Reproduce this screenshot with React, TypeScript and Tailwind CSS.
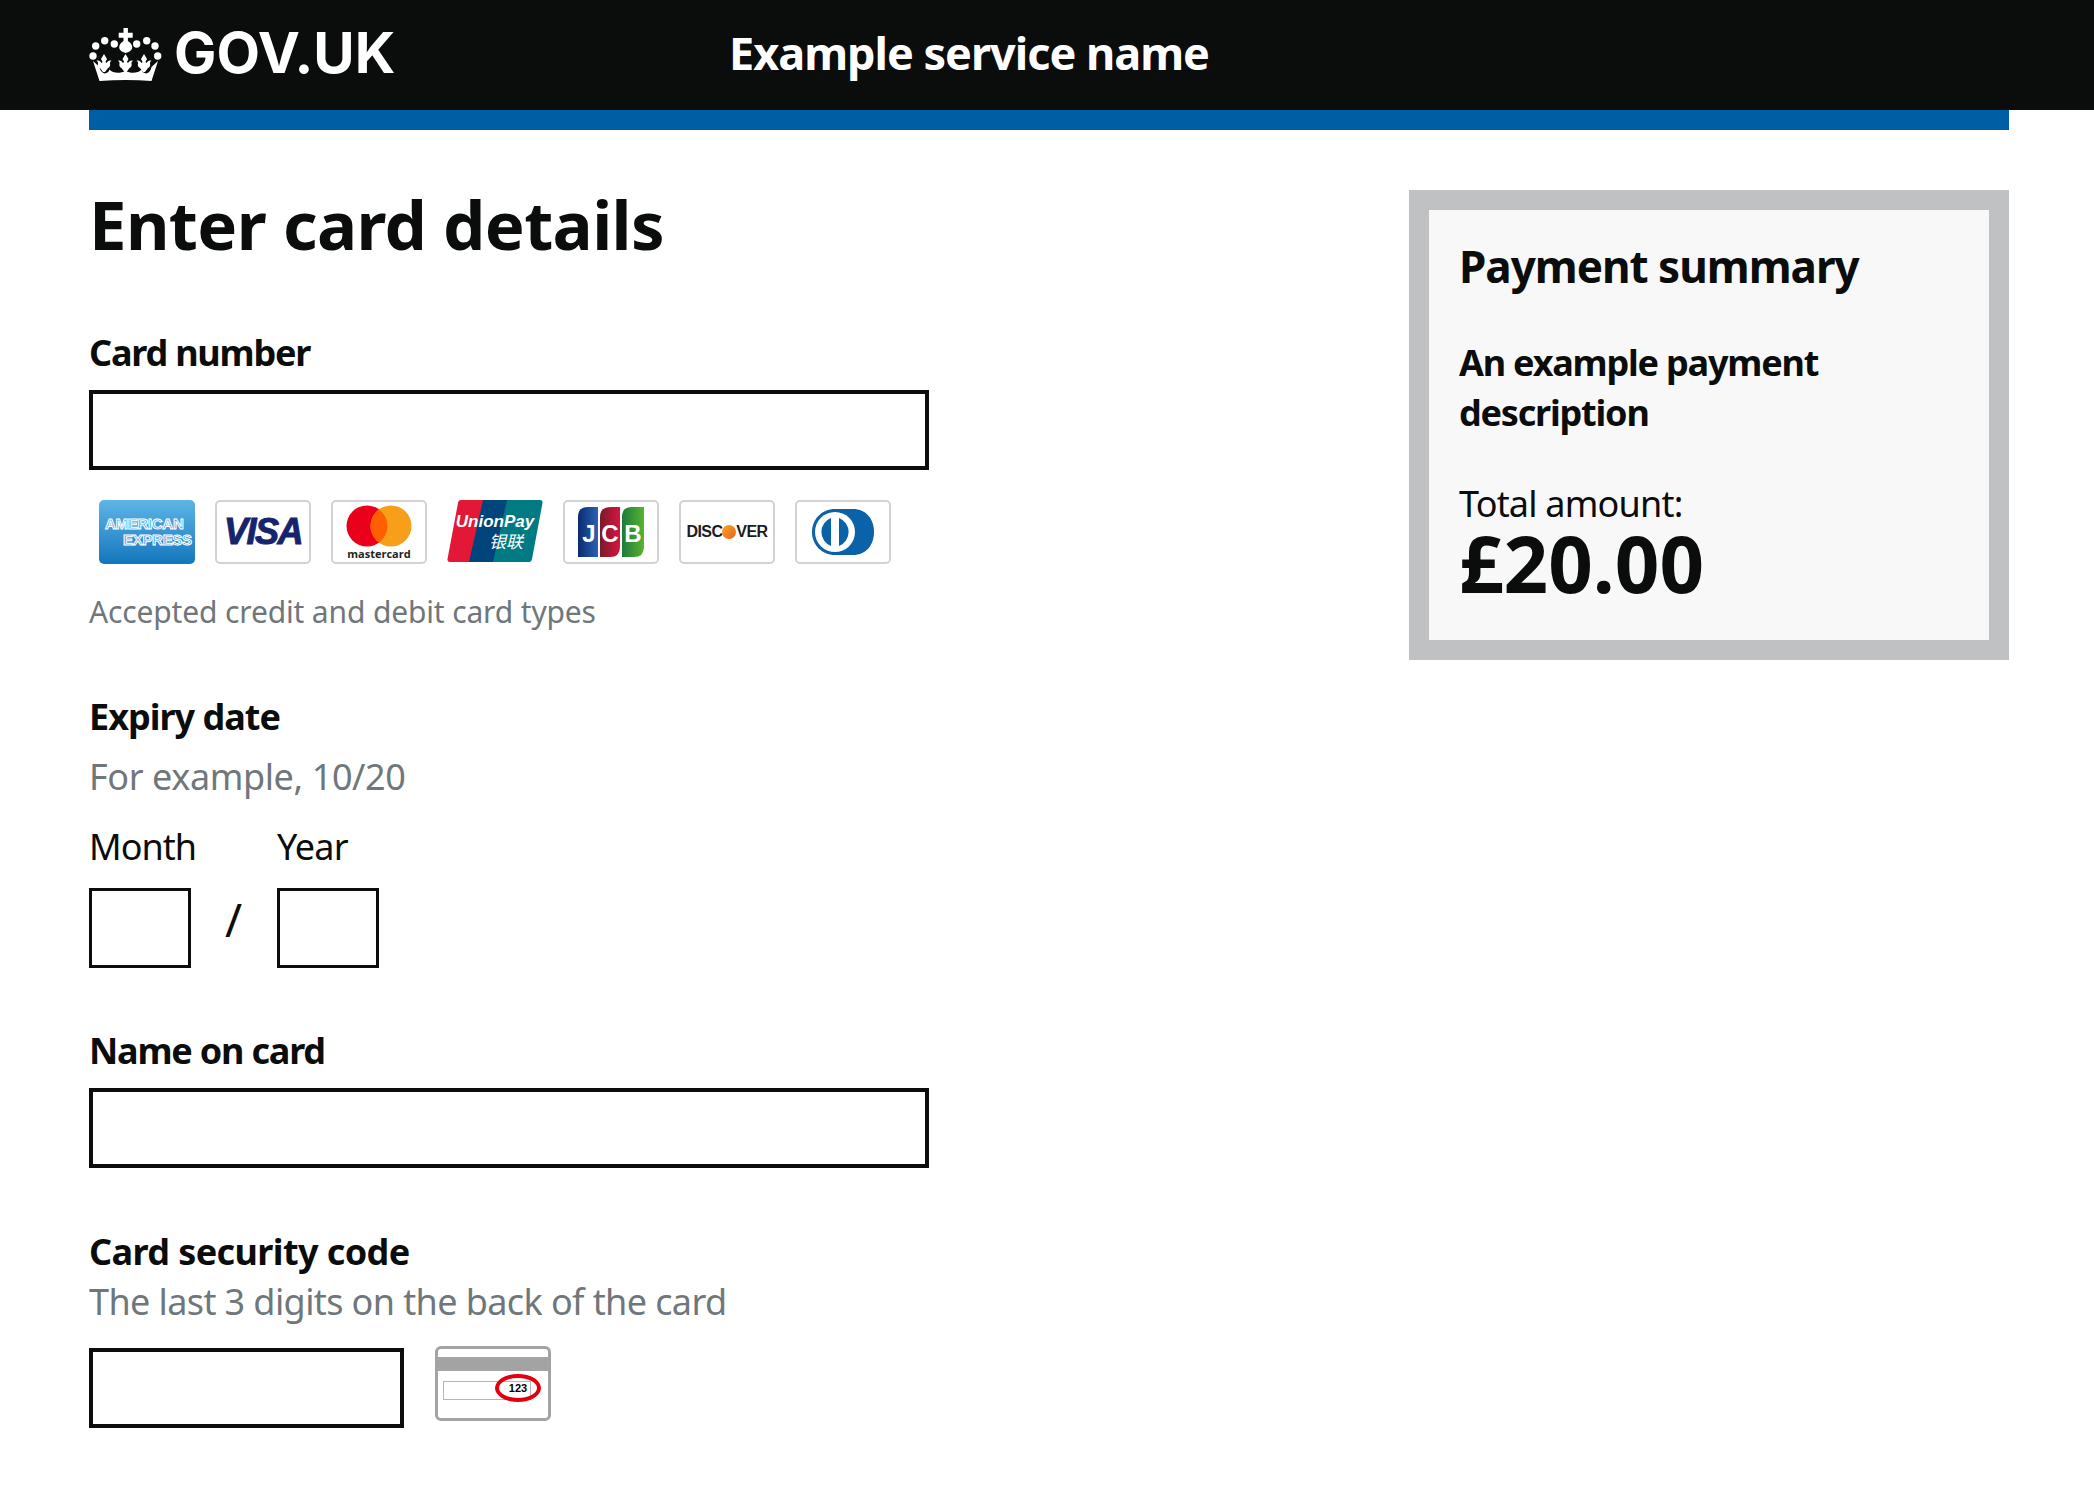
function Fleur({ x }: { x: number }) {
  return (
    <path d={`M${x} 26l3 5-1.600 3 1.200 1c1-2 3-3 5-2-1 0-2 1-1.500 3 .4 2-.7 3.500-2.100 4l-3 4h-2l-3-4c-1.400-.5-2.500-2-2.100-4 .5-2-.5-3-1.500-3 2-1 4 0 5 2l1.200-1-1.600-3z`} />
  );
}

function Crown() {
  return (
    <svg viewBox="0 0 73 53" className="w-[73px] h-[53px] mb-[2px]" fill="#fff">
      <path d="M34.500 0h4.400v4.800h4.800v5h-4.800v3.200c3 1.800 4.300 4.400 4.300 6.300 0 2.700-2.500 4.700-6.500 5.700-4-1-6.500-3-6.500-5.700 0-1.900 1.300-4.500 4.300-6.300V9.800h-4.800v-5h4.800z" />
      <circle cx="6.700" cy="18" r="3.700" /><circle cx="15.700" cy="12.700" r="3.700" /><circle cx="25.300" cy="16" r="3.700" />
      <circle cx="47.700" cy="16" r="3.700" /><circle cx="57.700" cy="12.700" r="3.700" /><circle cx="66" cy="18" r="3.700" />
      <circle cx="4" cy="28" r="3.700" /><circle cx="68.700" cy="28" r="3.700" />
      <Fleur x={15} />
      <Fleur x={36.500} />
      <Fleur x={55} />
      <path d="M4 33l6.500 6c.5 3 2 5.500 5 6.500 3-.3 4.500-2 5-4 3 3.500 10 4.500 16 1.500 6 3 13 2 16-1.500.5 2 2 3.700 5 4 3-1 4.500-3.500 5-6.500l6.500-6-6.500 20c-17-1.500-34-1.500-52 0z" />
    </svg>
  );
}

function CardBox({ children }: { children: React.ReactNode }) {
  return (
    <div className="w-[96px] h-[64px] rounded-[5px] border-2 border-[#d2d2d2] bg-white flex flex-col items-center justify-center overflow-hidden">
      {children}
    </div>
  );
}

function Amex() {
  return (
    <div className="w-[96px] h-[64px] rounded-[5px] bg-linear-to-b from-[#5db5e6] to-[#0e76bd] flex flex-col justify-center text-[#4aa5de] font-['Liberation_Sans',sans-serif] font-bold leading-[16px] [-webkit-text-stroke:1px_white]">
      <span className="text-[15px] pl-[6px] tracking-[-0.3px]">AMERICAN</span>
      <span className="text-[15px] pl-[24px] tracking-[-0.3px]">EXPRESS</span>
    </div>
  );
}

function Visa() {
  return (
    <CardBox>
      <span className="text-[#15246d] text-[36px] leading-none font-bold italic tracking-[-1.500px] font-['Liberation_Sans',sans-serif] [-webkit-text-stroke:1px_#15246d]">VISA</span>
    </CardBox>
  );
}

function Mastercard() {
  return (
    <CardBox>
      <svg viewBox="0 0 66 42" className="w-[66px] h-[42px]">
        <circle cx="21" cy="21" r="20.500" fill="#eb001b" />
        <circle cx="45" cy="21" r="20.500" fill="#f79e1b" />
        <path d="M33 4.400a20.500 20.500 0 0 1 0 33.200a20.500 20.500 0 0 1 0-33.200z" fill="#ff5f00" />
      </svg>
      <span className="text-[#231f20] text-[11px] leading-[13px] font-bold font-['Open_Sans',sans-serif]">mastercard</span>
    </CardBox>
  );
}

function UnionPay() {
  return (
    <div className="relative w-[96px] h-[62px]">
      <svg viewBox="0 0 96 62" className="absolute inset-0 w-[96px] h-[62px]">
        <path d="M14 0h24L24 62H3q-3 0-2.500-3L11 3q.5-3 3-3z" fill="#e21836" />
        <path d="M36 0h28L50 62H22z" fill="#00447c" />
        <path d="M60 0h33q3 0 2.500 3L85 59q-.5 3-3 3H46z" fill="#007b84" />
      </svg>
      <div className="absolute inset-0 flex flex-col items-center justify-center text-white">
        <span className="text-[17px] leading-[20px] italic font-bold font-['Liberation_Sans',sans-serif]">UnionPay</span>
        <span className="text-[17px] leading-[18px] italic pl-[22px] font-['Noto_Sans_CJK_SC',sans-serif]">银联</span>
      </div>
    </div>
  );
}

function Jcb() {
  return (
    <CardBox>
      <svg viewBox="0 0 66 50" className="w-[66px] h-[50px]">
        <defs>
          <linearGradient id="jcb-b" x1="0" x2="1" y1="0" y2="0"><stop offset="0" stopColor="#0b2a70" /><stop offset="1" stopColor="#2a62b4" /></linearGradient>
          <linearGradient id="jcb-r" x1="0" x2="1" y1="0" y2="0"><stop offset="0" stopColor="#7a1a2c" /><stop offset="1" stopColor="#d81440" /></linearGradient>
          <linearGradient id="jcb-g" x1="0" x2="1" y1="0" y2="0"><stop offset="0" stopColor="#1d7a3a" /><stop offset="1" stopColor="#58b431" /></linearGradient>
        </defs>
        <path d="M10 0h10v50H0V10Q0 0 10 0z" fill="url(#jcb-b)" />
        <path d="M33 0h9v40q0 10-10 10H22V10q0-10 11-10z" fill="url(#jcb-r)" />
        <path d="M54 0h12v40q0 10-10 10H44V10q0-10 10-10z" fill="url(#jcb-g)" />
        <text x="11" y="35" textAnchor="middle" fontFamily="Liberation Sans" fontWeight="700" fontSize="24" fill="#fff">J</text>
        <text x="32" y="35" textAnchor="middle" fontFamily="Liberation Sans" fontWeight="700" fontSize="24" fill="#fff">C</text>
        <text x="55" y="35" textAnchor="middle" fontFamily="Liberation Sans" fontWeight="700" fontSize="24" fill="#fff">B</text>
      </svg>
    </CardBox>
  );
}

function Discover() {
  return (
    <CardBox>
      <span className="flex items-center text-[#1c1c1c] text-[16px] font-bold tracking-[-0.6px] font-['Liberation_Sans',sans-serif]">
        DISC
        <span className="w-[14px] h-[14px] rounded-full bg-linear-to-br from-[#f6a623] to-[#e8601c]" />
        VER
      </span>
    </CardBox>
  );
}

function Diners() {
  return (
    <CardBox>
      <svg viewBox="0 0 62 46" className="w-[62px] h-[46px]">
        <path d="M23 0h18c13 0 21 10 21 23S54 46 41 46H23C10 46 0 36 0 23S10 0 23 0z" fill="#0a62a8" />
        <circle cx="23" cy="23" r="20" fill="#fff" />
        <path d="M19 9v28a15 15 0 0 1 0-28zM27 9v28a15 15 0 0 0 0-28z" fill="#0a62a8" />
      </svg>
    </CardBox>
  );
}

function CvvCard() {
  return (
    <div className="relative -mt-[2px] w-[116px] h-[75px] rounded-[6px] border-[3px] border-[#a3a3a3] bg-white overflow-hidden">
      <div className="mt-[8px] h-[14px] bg-[#a3a3a3]" />
      <div className="mt-[10px] ml-[5px] w-[88px] h-[19px] border border-[#b5b5b5]" />
      <div className="absolute right-[7px] top-[25px] w-[46px] h-[28px] rounded-[50%] border-[4px] border-[#e2000f] flex items-center justify-center text-[11px] font-bold text-black font-['Liberation_Sans',sans-serif]">
        123
      </div>
    </div>
  );
}

export default function App() {
  return (
    <div className="min-h-[1496px] bg-white text-[#0b0c0c] font-['Noto_Sans',sans-serif]">
      <header className="h-[110px] bg-[#0b0c0c] flex items-center pl-[89px]">
        <div className="w-[640px] flex items-center gap-[12px]">
          <Crown />
          <span className="text-white text-[56.500px] leading-none font-bold font-['Inter',sans-serif] mb-[4px]">GOV.UK</span>
        </div>
        <span className="text-white text-[45px] font-bold tracking-[-1px] mb-[4px]">Example service name</span>
      </header>

      <div className="pl-[89px] pr-[85px]">
        <div className="h-[20px] bg-[#005ea5]" />
        <main className="flex justify-between items-start">
          <form className="w-[840px]">
            <h1 className="mt-[58px] text-[67px] leading-[72px] font-bold tracking-[-0.600px]">Enter card details</h1>
            <label className="block mt-[70px] text-[36px] leading-[46px] font-bold tracking-[-1.200px]">Card number</label>
            <input className="block mt-[14px] w-[840px] h-[80px] border-4 border-[#0b0c0c]" />
            <div className="mt-[30px] pl-[10px] flex gap-[20px]">
              <Amex />
              <Visa />
              <Mastercard />
              <UnionPay />
              <Jcb />
              <Discover />
              <Diners />
            </div>
            <p className="mt-[25px] text-[30px] leading-[46px] tracking-[-0.150px] text-[#6f777b]">Accepted credit and debit card types</p>

            <p className="mt-[59px] text-[36px] leading-[46px] font-bold tracking-[-1px]">Expiry date</p>
            <p className="mt-[14px] text-[36px] leading-[46px] tracking-[-0.400px] text-[#6f777b]">For example, 10/20</p>
            <div className="mt-[24px] flex">
              <div className="w-[188px] relative">
                <label className="block text-[36px] leading-[46px] tracking-[-1px]">Month</label>
                <input className="block mt-[18px] w-[102px] h-[80px] border-[3px] border-[#0b0c0c]" />
                <span className="absolute left-[136px] top-[65px] text-[46px] leading-[60px]">/</span>
              </div>
              <div>
                <label className="block text-[36px] leading-[46px] tracking-[-0.800px]">Year</label>
                <input className="block mt-[18px] w-[102px] h-[80px] border-[3px] border-[#0b0c0c]" />
              </div>
            </div>
            <p className="mt-[60px] text-[36px] leading-[46px] font-bold tracking-[-1.200px]">Name on card</p>
            <input className="block mt-[14px] w-[840px] h-[80px] border-4 border-[#0b0c0c]" />
            <p className="mt-[61px] text-[36px] leading-[46px] font-bold tracking-[-0.600px]">Card security code</p>
            <p className="mt-[4px] text-[36px] leading-[46px] tracking-[-0.600px] text-[#6f777b]">The last 3 digits on the back of the card</p>
            <div className="mt-[23px] flex items-start gap-[31px]">
              <input className="block w-[315px] h-[80px] border-4 border-[#0b0c0c]" />
              <CvvCard />
            </div>
          </form>

          <aside className="mt-[60px] w-[600px] h-[470px] border-[20px] border-[#bfc1c3] bg-[#f8f8f8] px-[30px] pt-[31px]">
            <h2 className="text-[44px] leading-[50px] font-bold tracking-[-1px]">Payment summary</h2>
            <p className="mt-[47px] text-[36px] leading-[50px] font-bold tracking-[-1.200px]">An example payment description</p>
            <p className="mt-[46px] text-[36px] leading-[40px] tracking-[-0.800px]">Total amount:</p>
            <p className="mt-[1px] text-[78px] leading-[76px] font-bold">£20.00</p>
          </aside>
        </main>
      </div>
    </div>
  );
}
